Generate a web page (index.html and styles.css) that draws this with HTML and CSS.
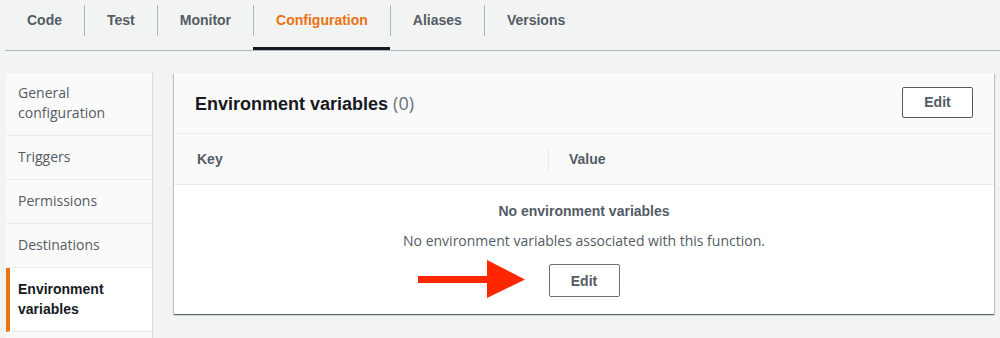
FILE: index.html
```html
<!DOCTYPE html>
<html lang="en">
<head>
    <meta charset="UTF-8">
    <title>Configuration - Environment variables</title>
    <link rel="stylesheet" href="styles.css">
</head>
<body>

<!-- Function tabs -->
<nav class="tabs">
    <div class="tab first"><span class="tab-label">Code</span></div>
    <div class="tab"><span class="tab-label">Test</span></div>
    <div class="tab"><span class="tab-label">Monitor</span></div>
    <div class="tab active"><span class="tab-label">Configuration</span></div>
    <div class="tab"><span class="tab-label">Aliases</span></div>
    <div class="tab"><span class="tab-label">Versions</span></div>
</nav>

<div class="content">
    <ul class="side-nav">
        <li>General configuration</li>
        <li>Triggers</li>
        <li>Permissions</li>
        <li>Destinations</li>
        <li class="active">Environment variables</li>
    </ul>

    <section class="panel">
        <div class="panel-header">
            <h2>Environment variables <span class="count">(0)</span></h2>
            <button type="button" class="btn">Edit</button>
        </div>
        <div class="table-head">
            <div class="col col-key">Key</div>
            <div class="col col-value">Value</div>
        </div>
        <div class="empty">
            <div class="empty-title">No environment variables</div>
            <div class="empty-text">No environment variables associated with this function.</div>
            <button type="button" class="btn btn-empty">Edit</button>
            <!-- annotation arrow -->
            <svg class="arrow" width="108" height="40" viewBox="0 0 108 40">
                <rect x="0" y="16" width="70" height="7" fill="#ff2600"/>
                <polygon points="69,0 107,19.5 69,38" fill="#ff2600"/>
            </svg>
        </div>
    </section>
</div>

</body>
</html>
```

FILE: styles.css
```css
body {
    margin: 0;
    background-color: #f2f3f3;
    font-family: 'Liberation Sans', Arial, sans-serif;
    font-size: 14px;
    color: #16191f;
    height: 338px;
    overflow: hidden;
}
.tabs {
    display: flex;
    margin-left: 5px;
    border-bottom: 1px solid #aab7b8;
    height: 50px;
}
.tab {
    padding-top: 5px;
    height: 45px;
    font-weight: bold;
    color: #545b64;
}
.tab-label {
    display: block;
    padding: 0 22px;
    line-height: 31px;
    border-left: 1px solid #aab7b8;
}
.tab.first .tab-label {
    border-left: none;
}
.tab.active {
    color: #ec7211;
    height: 42px;
    border-bottom: 3px solid #16191f;
}
.content {
    display: flex;
    align-items: flex-start;
    padding: 22px 6px 0 6px;
    gap: 21px;
}
.side-nav {
    list-style: none;
    margin: 0;
    padding: 0 0 6px;
    width: 146px;
    flex-shrink: 0;
    background-color: #fafafa;
    border-right: 1px solid #d5dbdb;
    font-family: 'Open Sans', sans-serif;
}
.side-nav li {
    padding: 11px 12px 12px;
    line-height: 20px;
    color: #545b64;
    border-bottom: 1px solid #eaeded;
}
.side-nav li:first-child {
    padding-top: 10px;
}
.side-nav li.active {
    background-color: #fff;
    color: #16191f;
    font-family: 'Liberation Sans', Arial, sans-serif;
    font-weight: bold;
    border-left: 4px solid #ec7211;
    padding-left: 8px;
}
.panel {
    flex: 1;
    background-color: #fff;
    box-shadow: 0 1px 1px 0 rgba(0, 28, 36, 0.5), 1px 1px 1px 0 rgba(0, 28, 36, 0.15), -1px 1px 1px 0 rgba(0, 28, 36, 0.15);
}
.panel-header {
    display: flex;
    align-items: center;
    justify-content: space-between;
    height: 60px;
    padding: 0 21px 0 21px;
    background-color: #fafafa;
    border-bottom: 1px solid #eaeded;
}
.panel-header h2 {
    margin: 0;
    font-size: 18px;
    font-weight: bold;
    color: #16191f;
}
.count {
    font-family: 'Open Sans', sans-serif;
    font-size: 18px;
    font-weight: normal;
    color: #687078;
}
.btn {
    width: 71px;
    height: 31px;
    margin-top: -2px;
    background-color: #fff;
    border: 1px solid #545b64;
    border-radius: 2px;
    font-family: inherit;
    font-size: 14px;
    font-weight: bold;
    color: #545b64;
    cursor: pointer;
}
.table-head {
    display: flex;
    align-items: center;
    height: 50px;
    background-color: #fafafa;
    border-bottom: 1px solid #eaeded;
    font-weight: bold;
    color: #545b64;
}
.col-key {
    width: 351px;
    padding-left: 23px;
}
.col-value {
    flex: 1;
    padding-left: 20px;
    line-height: 25px;
    border-left: 1px solid #eaeded;
}
.empty {
    position: relative;
    text-align: center;
    padding: 16px 0 17px;
    color: #545b64;
    line-height: 20px;
}
.empty-title {
    font-weight: bold;
}
.empty-text {
    margin-top: 10px;
    font-family: 'Open Sans', sans-serif;
}
.btn-empty {
    display: block;
    margin: 13px auto 0;
    height: 33px;
    border-color: #687078;
}
.arrow {
    position: absolute;
    left: 244px;
    top: 75px;
}
```
